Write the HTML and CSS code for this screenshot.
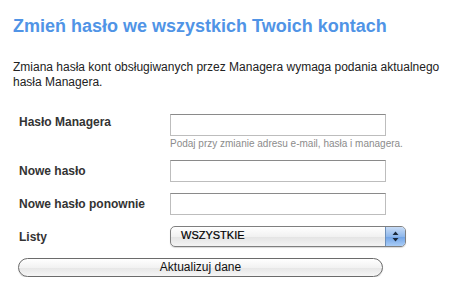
FILE: index.html
```html
<!DOCTYPE html>
<html lang="pl">
<head>
  <meta charset="UTF-8">
  <title>Zmień hasło</title>
  <link rel="stylesheet" href="styles.css">
</head>
<body>
  <div class="page">
    <h2 class="title">Zmień hasło we wszystkich Twoich kontach</h2>
    <p class="intro">Zmiana hasła kont obsługiwanych przez Managera wymaga podania aktualnego hasła Managera.</p>

    <form class="form">
      <div class="row">
        <label class="label label-top" for="old-pass">Hasło Managera</label>
        <div class="field">
          <input type="password" id="old-pass" class="input">
          <div class="hint">Podaj przy zmianie adresu e-mail, hasła i managera.</div>
        </div>
      </div>
      <div class="row">
        <label class="label" for="new-pass">Nowe hasło</label>
        <div class="field"><input type="password" id="new-pass" class="input"></div>
      </div>
      <div class="row">
        <label class="label" for="new-pass2">Nowe hasło ponownie</label>
        <div class="field"><input type="password" id="new-pass2" class="input"></div>
      </div>
      <div class="row">
        <label class="label" for="lists">Listy</label>
        <div class="field">
          <div class="select" id="lists">
            <span class="select-text">WSZYSTKIE</span>
            <span class="select-arrows">
              <svg width="7" height="11" viewBox="0 0 7 11"><path d="M3.5 0.5 L6.5 4 L0.5 4 Z M0.5 7 L6.5 7 L3.5 10.5 Z" fill="#1b2a3c"/></svg>
            </span>
          </div>
        </div>
      </div>
      <button type="button" class="btn">Aktualizuj dane</button>
    </form>
  </div>
</body>
</html>
```

FILE: styles.css
```css
/* Base styling */
body {
  margin: 0;
  font-family: 'Liberation Sans', Arial, sans-serif;
  background: #ffffff;
  color: #222;
}

.page {
  padding: 16px 13px 0 13px;
}

.title {
  margin: 0;
  font-size: 18px;
  line-height: 20px;
  font-weight: bold;
  color: #5094e6;
}

.intro {
  margin: 24px 0 0 0;
  font-size: 12px;
  line-height: 15px;
  color: #222;
}

.form {
  margin-top: 24px;
  padding-left: 6px;
}

.row {
  display: grid;
  grid-template-columns: 151px 1fr;
  align-items: start;
  margin-bottom: 11px;
}

.label {
  font-size: 12px;
  font-weight: bold;
  color: #333;
  padding-top: 4px;
}

.label-top {
  padding-top: 1px;
}

.input {
  display: block;
  box-sizing: border-box;
  width: 216px;
  height: 22px;
  margin: 0;
  border: 1px solid #bdbdbd;
  border-top-color: #8a8a8a;
  background: #fff;
}

.hint {
  font-size: 10px;
  color: #8c8c8c;
  margin-top: 2px;
}

.select {
  box-sizing: border-box;
  width: 236px;
  height: 21px;
  display: flex;
  align-items: center;
  justify-content: space-between;
  border: 1px solid #7f7f7f;
  border-radius: 5px;
  background: linear-gradient(#ffffff, #f1f1f1 50%, #e3e3e3 51%, #f4f4f4);
  overflow: hidden;
  box-shadow: 0 1px 1px rgba(0, 0, 0, 0.15);
}

.select-text {
  padding-left: 10px;
  font-size: 11px;
  color: #000;
  padding-bottom: 3px;
  -webkit-text-stroke: 0.2px #000;
}

.select-arrows {
  width: 19px;
  height: 100%;
  display: flex;
  align-items: center;
  justify-content: center;
  background: linear-gradient(#c8dcf6, #8fb8ec 50%, #6fa2e6 51%, #a9ccf6);
  border-left: 1px solid #6d8fb8;
}

.btn {
  display: block;
  box-sizing: border-box;
  width: 365px;
  height: 19px;
  margin: 1px 0 0 -1px;
  padding: 0 0 2px 0;
  border: 1px solid #6b6b6b;
  border-radius: 10px;
  background: linear-gradient(#ffffff, #f2f2f2 50%, #e6e6e6 51%, #f6f6f6);
  font-family: 'Liberation Sans', Arial, sans-serif;
  font-size: 12px;
  color: #111;
  box-shadow: 0 1px 1px rgba(0, 0, 0, 0.15);
}
```
